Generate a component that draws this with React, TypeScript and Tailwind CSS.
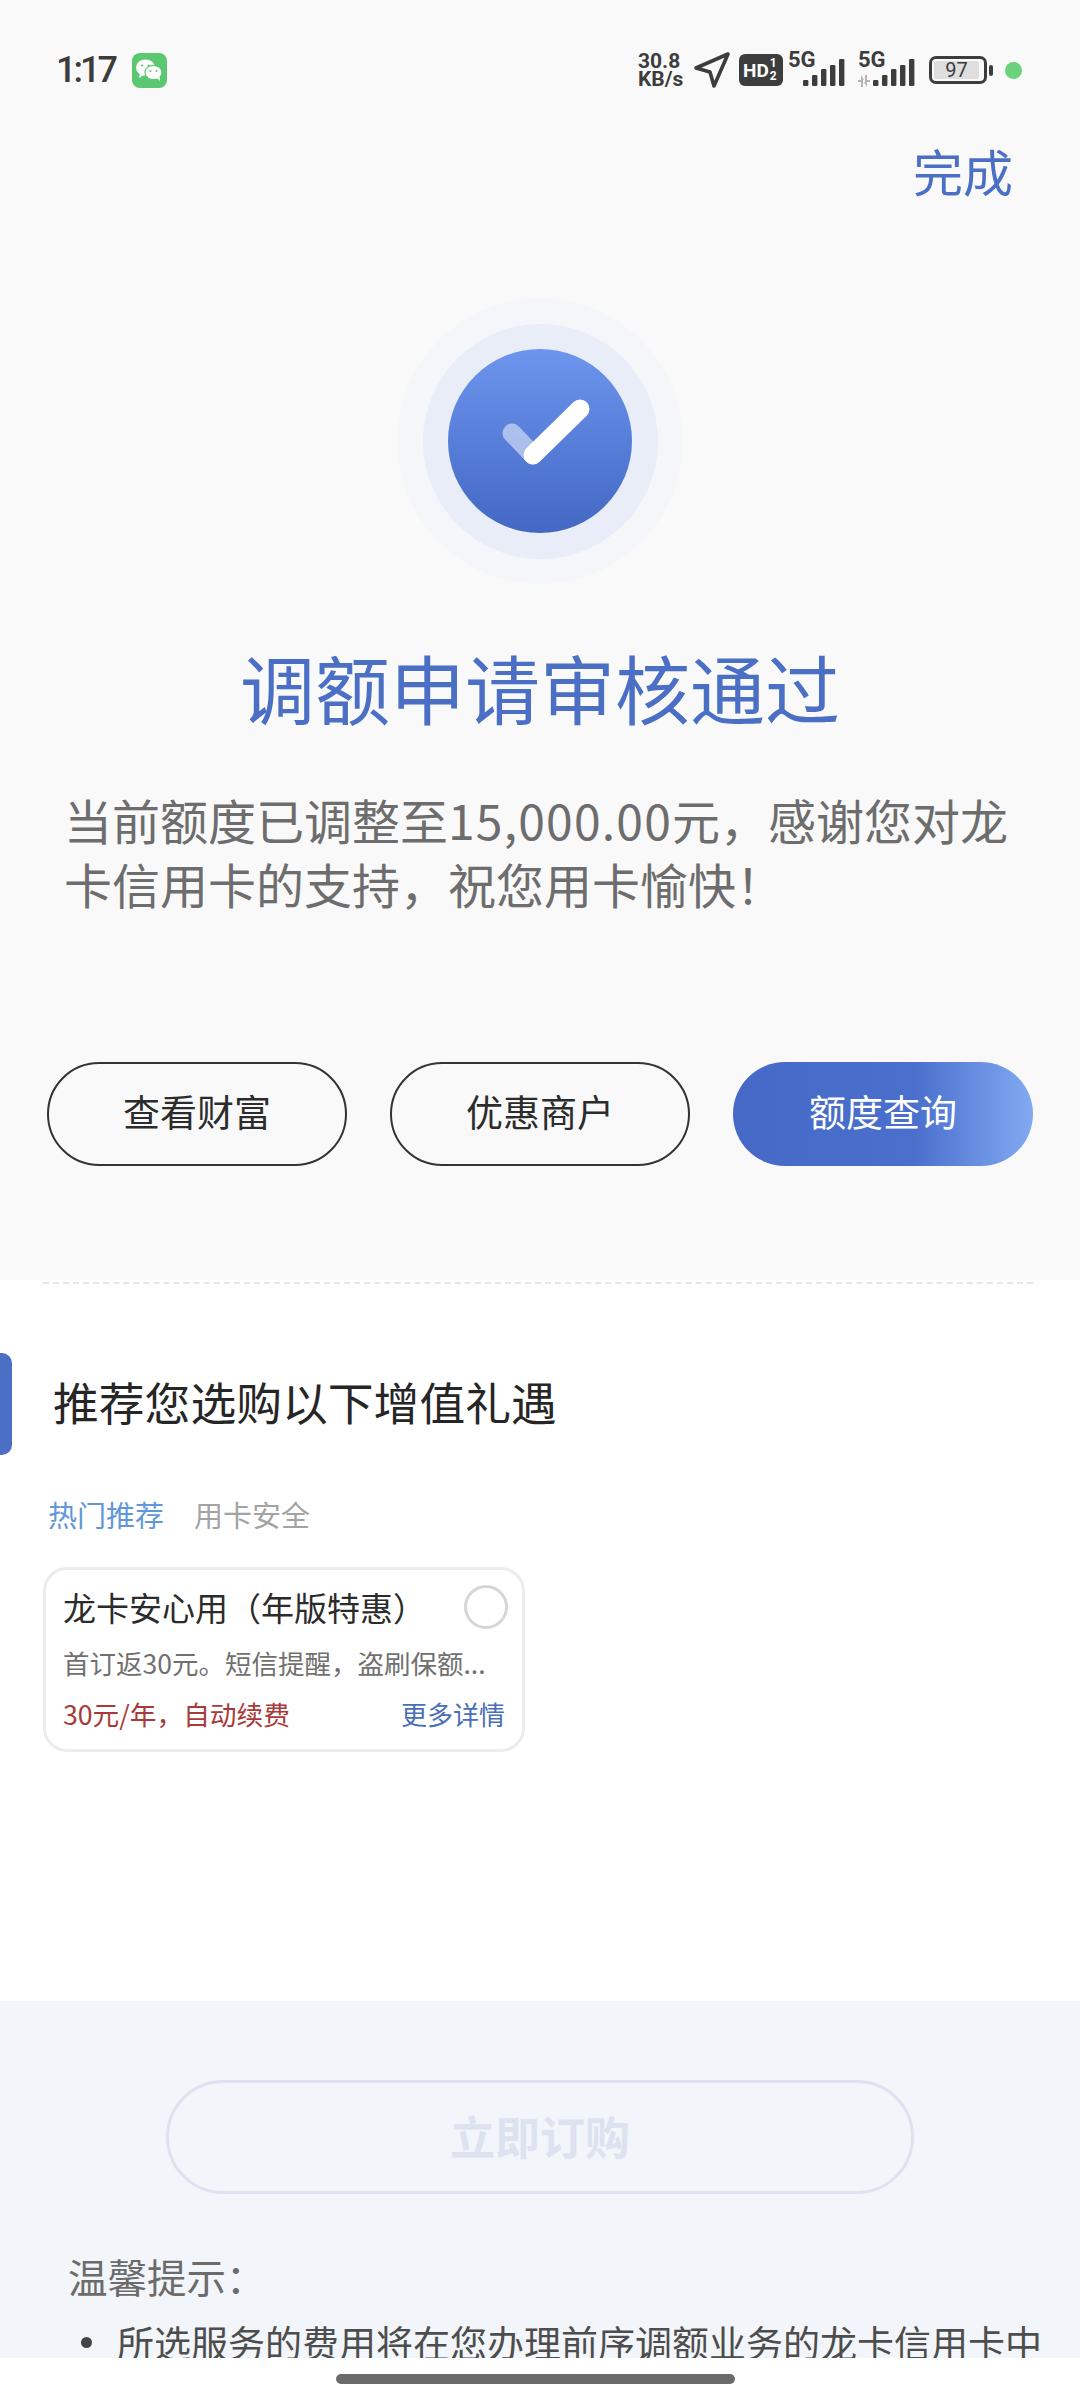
const fontStack = { fontFamily: '"Noto Sans CJK SC", "Noto Sans", sans-serif' };

function Signal() {
  const bars = [
    { x: 0, h: 6 },
    { x: 9, h: 11 },
    { x: 18, h: 17 },
    { x: 27, h: 21 },
    { x: 36, h: 27 },
  ];
  return (
    <svg width="42" height="28" viewBox="0 0 42 28" fill="#3d3d3d">
      {bars.map((b) => (
        <rect key={b.x} x={b.x} y={27 - b.h} width="5.4" height={b.h} rx="1.2" />
      ))}
    </svg>
  );
}

function StatusBar() {
  return (
    <div className="h-[140px] flex items-center justify-between pl-[56px] pr-[58px] shrink-0">
      <div className="flex items-center gap-[17px]">
        <span className="text-[36px] leading-[44px] tracking-[-3px] font-medium text-[#3c3c3c] font-['Roboto',sans-serif]">1:17</span>
        <div className="w-[35px] h-[35px] rounded-[8px] bg-[#5cc771] flex items-center justify-center">
          <svg width="28" height="24" viewBox="0 0 28 24">
            <ellipse cx="10.5" cy="9.5" rx="9.5" ry="8" fill="#fff" />
            <path d="M5 15l-1 5 5-3z" fill="#fff" />
            <ellipse cx="18.5" cy="14.5" rx="8.5" ry="7.2" stroke="#5cc771" strokeWidth="1.2" fill="#fff" />
            <path d="M22 20l3 3-.5-4.5z" fill="#fff" />
            <circle cx="7" cy="7.5" r="1.1" fill="#5cc771" />
            <circle cx="13.5" cy="7.5" r="1.1" fill="#5cc771" />
            <circle cx="15.5" cy="13" r="1" fill="#5cc771" />
            <circle cx="21.5" cy="13" r="1" fill="#5cc771" />
          </svg>
        </div>
      </div>
      <div className="flex items-center text-[#3d3d3d] font-['Roboto',sans-serif]">
        <div className="flex flex-col items-start w-[50px] text-[21px] leading-[18px] font-bold">
          <span>30.8</span>
          <span>KB/s</span>
        </div>
        <svg className="ml-[5px]" width="38" height="38" viewBox="0 0 38 38" fill="none">
          <path d="M3 17 35 3 21 35l-4-14z" stroke="#3d3d3d" strokeWidth="3.6" strokeLinejoin="round" />
        </svg>
        <div className="ml-[8px] w-[44px] h-[32px] rounded-[6px] bg-[#3d3d3d] flex items-center pl-[4px] text-white text-[19px] font-bold leading-none">
          <span>HD</span>
          <span className="flex flex-col text-[12px] leading-[13px] ml-[1px]">
            <span>1</span>
            <span>2</span>
          </span>
        </div>
        <div className="relative ml-[5px] w-[57px] h-[34px]">
          <span className="absolute left-0 top-[-3px] text-[22px] leading-[20px] font-bold">5G</span>
          <div className="absolute right-0 bottom-0 flex">
            <Signal />
          </div>
        </div>
        <div className="relative ml-[12px] w-[58px] h-[34px]">
          <span className="absolute left-[1px] top-[-3px] text-[22px] leading-[20px] font-bold">5G</span>
          <div className="absolute right-0 bottom-0 flex">
            <Signal />
          </div>
          <svg className="absolute left-0 bottom-0" width="14" height="12" viewBox="0 0 14 12" fill="#b5b5b5">
            <path d="M4 0v5H7zM1 5h5v7H4V7H1zM10 12V7H7zM13 7H8V0h2v5h3z" />
          </svg>
        </div>
        <div className="ml-[14px] flex items-center">
          <div className="w-[58px] h-[28px] rounded-[7px] border-[3px] border-[#3d3d3d] p-[2px]">
            <div className="w-[45px] h-full rounded-[2px] bg-[#dedede] flex items-center justify-center text-[20px] leading-none">97</div>
          </div>
          <div className="ml-[2px] w-[4px] h-[11px] rounded-[2px] bg-[#3d3d3d]" />
        </div>
        <div className="ml-[12px] w-[17px] h-[17px] rounded-full bg-[#6bd27c]" />
      </div>
    </div>
  );
}

function StatusIcon() {
  return (
    <div className="mt-[94px] mx-auto w-[286px] h-[286px] rounded-full bg-[#f4f6f9] flex items-center justify-center">
      <div className="w-[235px] h-[235px] rounded-full bg-[#e8edf7] flex items-center justify-center">
        <div className="w-[184px] h-[184px] rounded-full bg-gradient-to-b from-[#6e95ee] to-[#4268c3] flex items-center justify-center">
          <svg width="184" height="184" viewBox="0 0 184 184" fill="none">
            <path d="M64 84 85 106" stroke="#fff" strokeOpacity="0.5" strokeWidth="19" strokeLinecap="round" />
            <path d="M85 106 132 60" stroke="#fff" strokeWidth="19" strokeLinecap="round" />
          </svg>
        </div>
      </div>
    </div>
  );
}

export default function App() {
  return (
    <div className="w-[1080px] h-[2400px] flex flex-col overflow-hidden bg-white" style={fontStack}>
      <div className="flex-1 overflow-hidden">
        <section className="h-[1280px] bg-[#f9f9f9] flex flex-col">
          <StatusBar />
          <div className="h-[64px] flex items-center justify-end pr-[67px] pb-[4px] text-[50px] leading-[60px] text-[#4a6fc4]">完成</div>
          <StatusIcon />
          <h1 className="mt-[58px] text-center text-[75px] leading-[90px] font-normal text-[#4a6fc4]">调额申请审核通过</h1>
          <p className="mt-[55px] ml-[64px] mr-[56px] text-[48px] leading-[64px] text-[#6d6d6d]">
            当前额度已调整至<span className="tracking-[1.2px]">15,000.00</span>元，感谢您对龙卡信用卡的支持，祝您用卡愉快！
          </p>
          <div className="mt-[147px] px-[47px] flex justify-between">
            <button className="w-[300px] h-[104px] pb-[4px] rounded-full border-2 border-[#333] text-[37px] text-[#2c2c2c]">查看财富</button>
            <button className="w-[300px] h-[104px] pb-[4px] rounded-full border-2 border-[#333] text-[37px] text-[#2c2c2c]">优惠商户</button>
            <button className="w-[300px] h-[104px] pb-[4px] rounded-full bg-gradient-to-r from-[#4669c8] via-[#4a6fcc] via-60% to-[#82aaf2] text-[37px] text-white">额度查询</button>
          </div>
        </section>

        <section className="h-[719px] bg-white">
          <div className="mt-[2px] ml-[43px] mr-[47px] border-t-2 border-dashed border-[#e6e6e6]" />
          <div className="mt-[69px] h-[102px] flex items-center gap-[41px]">
            <div className="w-[12px] h-full rounded-r-[10px] bg-[#4a6fc4]" />
            <h2 className="pb-[6px] text-[45.8px] leading-[60px] font-normal text-[#262626]">推荐您选购以下增值礼遇</h2>
          </div>
          <div className="mt-[39px] pl-[48px] flex gap-[30px] text-[29px] leading-[40px]">
            <span className="text-[#5f97d8]">热门推荐</span>
            <span className="text-[#a3a3a3]">用卡安全</span>
          </div>
          <div className="mt-[33px] ml-[43px] w-[482px] h-[185px] rounded-[24px] border-[3px] border-[#ececec] pl-[17px] pr-[17px] pt-[15px]">
            <div className="flex items-center justify-between h-[44px]">
              <span className="text-[33px] leading-[44px] text-[#2b2b2b] whitespace-nowrap">龙卡安心用（年版特惠）</span>
              <div className="w-[44px] h-[44px] rounded-full border-[3px] border-[#d6d6d6] bg-white shrink-0 -mr-[3px]" />
            </div>
            <p className="mt-[16px] text-[26.5px] leading-[36px] text-[#707070] whitespace-nowrap">首订返30元。短信提醒，盗刷保额...</p>
            <div className="mt-[15px] flex items-center justify-between leading-[36px]">
              <span className="text-[26.7px] text-[#a83a3a]">30元/年，自动续费</span>
              <span className="text-[26px] text-[#4a6fb5]">更多详情</span>
            </div>
          </div>
        </section>

        <section className="h-[401px] bg-[#f2f5f9] pt-[79px]">
          <button className="block mx-auto w-[748px] h-[114px] rounded-full border-[3px] border-[#dde2f0] pb-[2px] text-[45px] font-bold text-[#dde2f0]">立即订购</button>
          <p className="mt-[57px] ml-[68px] text-[39.5px] leading-[50px] text-[#6b6b6b]">温馨提示：</p>
          <div className="mt-[16px] pl-[81px] flex items-center gap-[25px]">
            <div className="w-[11px] h-[11px] rounded-full bg-[#444] shrink-0" />
            <p className="text-[37px] leading-[50px] text-[#4d4d4d] whitespace-nowrap">所选服务的费用将在您办理前序调额业务的龙卡信用卡中</p>
          </div>
        </section>
      </div>

      <div className="h-[42px] shrink-0 bg-white flex justify-center pt-[16px] pr-[9px]">
        <div className="w-[399px] h-[10px] rounded-full bg-[#6b6b6b]" />
      </div>
    </div>
  );
}
